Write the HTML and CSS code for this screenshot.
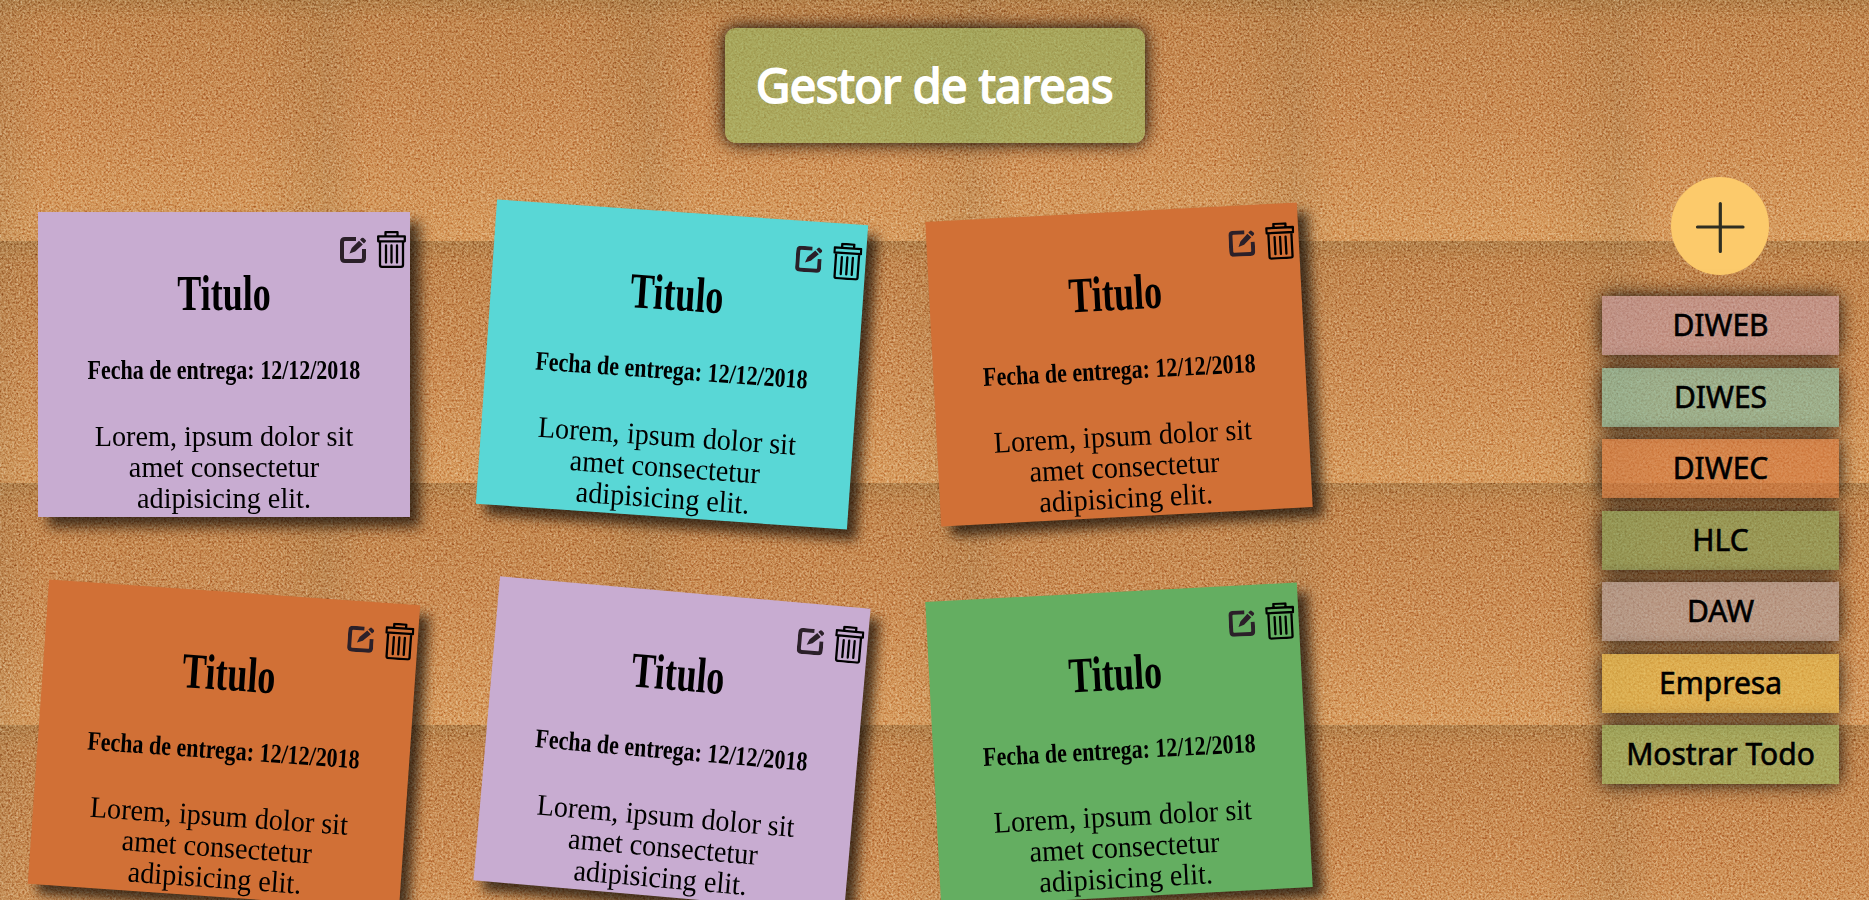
FILE: index.html
```html
<!DOCTYPE html>
<html lang="es">
<head>
<meta charset="utf-8">
<title>Gestor de tareas</title>
<link rel="stylesheet" href="styles.css">
</head>
<body>
<div class="cork" aria-hidden="true">
  <svg class="grain">
    <filter id="cork" x="0" y="0" width="100%" height="100%" color-interpolation-filters="sRGB">
      <feTurbulence type="fractalNoise" baseFrequency="0.48" numOctaves="4" seed="7"/>
      <feColorMatrix values="1.1 0.5 0 0 -0.28  1.1 0.5 0 0 -0.28  1.1 0.5 0 0 -0.28  0 0 0 0 1"/>
    </filter>
    <rect width="100%" height="100%" filter="url(#cork)"/>
  </svg>
</div>
<svg class="defs" aria-hidden="true">
  <symbol id="edit" viewBox="0 0 26 26">
    <path d="M16 2H5Q2 2 2 5v16q0 3 3 3h16q3 0 3-3V12" fill="none" stroke="currentColor" stroke-width="4" stroke-linecap="butt"/>
    <path d="M9.5 16.5l2.2-5.6 7.3-7.2 3.8 3.7-7.6 7z M20 2.7l1.6-1.6q1-.9 2 0l2 1.8q.9.9 0 1.8L23.9 6.500z" fill="currentColor"/>
  </symbol>
  <symbol id="trash" viewBox="0 0 29 37">
    <g fill="none" stroke="currentColor" stroke-width="2.3" stroke-linejoin="round" stroke-linecap="round">
      <path d="M8.500 5V1.200h12v4M1.200 5.300h26.600v5H1.200zM3 10.500V34q0 1.800 2 1.800h19q2 0 2-1.800V10.500M9 14.500v17M14.500 14.500v17M20 14.500v17"/>
    </g>
  </symbol>
</svg>
<header class="header"><h1 class="title">Gestor de tareas</h1></header>
<div class="layout">
  <main class="board">
    <article class="note lilac">
      <div class="tools"><svg class="edit"><use href="#edit"/></svg><svg class="trash"><use href="#trash"/></svg></div>
      <h2 class="name"><span>Titulo</span></h2>
      <h3 class="date"><span>Fecha de entrega: 12/12/2018</span></h3>
      <p class="text"><span>Lorem, ipsum dolor sit</span><span>amet consectetur</span><span>adipisicing elit.</span></p>
    </article>
    <article class="note cyan tilt-4">
      <div class="tools"><svg class="edit"><use href="#edit"/></svg><svg class="trash"><use href="#trash"/></svg></div>
      <h2 class="name"><span>Titulo</span></h2>
      <h3 class="date"><span>Fecha de entrega: 12/12/2018</span></h3>
      <p class="text"><span>Lorem, ipsum dolor sit</span><span>amet consectetur</span><span>adipisicing elit.</span></p>
    </article>
    <article class="note orange tilt-left">
      <div class="tools"><svg class="edit"><use href="#edit"/></svg><svg class="trash"><use href="#trash"/></svg></div>
      <h2 class="name"><span>Titulo</span></h2>
      <h3 class="date"><span>Fecha de entrega: 12/12/2018</span></h3>
      <p class="text"><span>Lorem, ipsum dolor sit</span><span>amet consectetur</span><span>adipisicing elit.</span></p>
    </article>
    <article class="note orange tilt-4">
      <div class="tools"><svg class="edit"><use href="#edit"/></svg><svg class="trash"><use href="#trash"/></svg></div>
      <h2 class="name"><span>Titulo</span></h2>
      <h3 class="date"><span>Fecha de entrega: 12/12/2018</span></h3>
      <p class="text"><span>Lorem, ipsum dolor sit</span><span>amet consectetur</span><span>adipisicing elit.</span></p>
    </article>
    <article class="note lilac tilt-5">
      <div class="tools"><svg class="edit"><use href="#edit"/></svg><svg class="trash"><use href="#trash"/></svg></div>
      <h2 class="name"><span>Titulo</span></h2>
      <h3 class="date"><span>Fecha de entrega: 12/12/2018</span></h3>
      <p class="text"><span>Lorem, ipsum dolor sit</span><span>amet consectetur</span><span>adipisicing elit.</span></p>
    </article>
    <article class="note green tilt-left">
      <div class="tools"><svg class="edit"><use href="#edit"/></svg><svg class="trash"><use href="#trash"/></svg></div>
      <h2 class="name"><span>Titulo</span></h2>
      <h3 class="date"><span>Fecha de entrega: 12/12/2018</span></h3>
      <p class="text"><span>Lorem, ipsum dolor sit</span><span>amet consectetur</span><span>adipisicing elit.</span></p>
    </article>
  </main>
  <aside class="side">
    <button class="add" aria-label="+"><svg viewBox="0 0 98 98"><path d="M26.500 50H72M49.300 26.500v48"/></svg></button>
    <nav class="filters">
      <a class="filter diweb">DIWEB</a>
      <a class="filter diwes">DIWES</a>
      <a class="filter diwec">DIWEC</a>
      <a class="filter hlc">HLC</a>
      <a class="filter daw">DAW</a>
      <a class="filter empresa">Empresa</a>
      <a class="filter todo">Mostrar Todo</a>
    </nav>
  </aside>
</div>
</body>
</html>
```
FILE: styles.css
```css
* { box-sizing: border-box; }
html { height: 100%; overflow: hidden; }
body {
  margin: 0;
  height: 900px;
  overflow: hidden;
  position: relative;
  font-family: "Noto Sans", "Open Sans", sans-serif;
}
.cork {
  position: absolute;
  inset: 0;
  z-index: -1;
  isolation: isolate;
  background-color: #c98a4e;
  background-image:
    linear-gradient(90deg, rgba(158,124,78,.24), rgba(158,124,78,0) 14%, rgba(150,110,66,0) 78%, rgba(150,115,66,.18)),
    linear-gradient(180deg, rgba(140,116,66,.24), rgba(140,116,66,0) 9%),
    linear-gradient(180deg, #be834a, #ca8c52 50%, #d69b5d);
  background-size: 323px 242px;
  background-position: 0 -1px;
}
.grain {
  display: block;
  width: 100%;
  height: 100%;
  mix-blend-mode: soft-light;
}
.defs { position: absolute; width: 0; height: 0; }
.header { display: flex; justify-content: center; padding-top: 28px; height: 177px; }
.title {
  width: 420px;
  height: 115px;
  margin: 0;
  border-radius: 11px;
  background: rgba(150,187,100,.6);
  box-shadow: 0 0 18px #000;
  color: #fff;
  font-size: 47px;
  font-weight: 400;
  line-height: 115px;
  letter-spacing: -.5px;
  text-align: center;
  white-space: nowrap;
  -webkit-text-stroke: 1.8px #fff;
}
.layout { display: flex; justify-content: space-between; padding: 0 30px 0 38px; }
.board {
  display: grid;
  grid-template-columns: repeat(3, 372px);
  grid-auto-rows: 305px;
  gap: 75px 75.7px;
  padding-top: 35px;
  height: 723px;
}
.note {
  position: relative;
  overflow: hidden;
  padding: 47px 0 0;
  box-shadow: 10px 10px 12px rgba(0,0,0,.66);
  color: #000;
  font-family: "Liberation Serif", serif;
  text-align: center;
}
.lilac { background: #c8acd1; }
.cyan { background: #59d7d6; }
.orange { background: #d17036; }
.green { background: #64ae61; }
.tilt-4 { transform: rotate(4deg); }
.tilt-5 { transform: rotate(5deg); }
.tilt-left { transform: rotate(-3deg); }
.tools { position: absolute; top: 19px; right: 4px; display: flex; gap: 11px; }
.edit { width: 26px; height: 26px; margin-top: 6px; color: #2b2029; }
.trash { width: 29px; height: 37px; }
.name, .date, .text { margin: 0; }
.name span, .date span, .text span { display: block; white-space: nowrap; }
.name { font-size: 50px; line-height: 68px; }
.name span { transform: scaleX(.72); }
.date { margin-top: 25px; font-size: 27px; line-height: 36px; }
.date span { transform: scaleX(.815); }
.text { margin-top: 32px; font-size: 30px; line-height: 31px; }
.text span { transform: scaleX(.94); }
.side { width: 237px; display: flex; flex-direction: column; align-items: center; }
.add { width: 98px; height: 98px; margin-left: -1px; padding: 0; border: 0; border-radius: 50%; background: #fcca6b; }
.add svg { display: block; width: 98px; height: 98px; fill: none; stroke: #2e2e22; stroke-width: 3.2; stroke-linecap: round; }
.filters { width: 237px; display: flex; flex-direction: column; gap: 12.5px; margin-top: 21px; }
.filter {
  height: 59px;
  box-shadow: 0 0 18px rgba(0,0,0,.9);
  color: #000;
  font-size: 30px;
  line-height: 57px;
  text-align: center;
  white-space: nowrap;
  -webkit-text-stroke: .6px #000;
}
.diweb { background: rgba(193,153,167,.6); }
.diwes { background: rgba(125,193,172,.6); }
.diwec { background: rgba(213,120,63,.6); }
.hlc { background: rgba(125,162,88,.6); }
.daw { background: rgba(173,160,163,.6); }
.empresa { background: rgba(230,190,73,.6); }
.todo { background: rgba(150,187,100,.6); }
```
